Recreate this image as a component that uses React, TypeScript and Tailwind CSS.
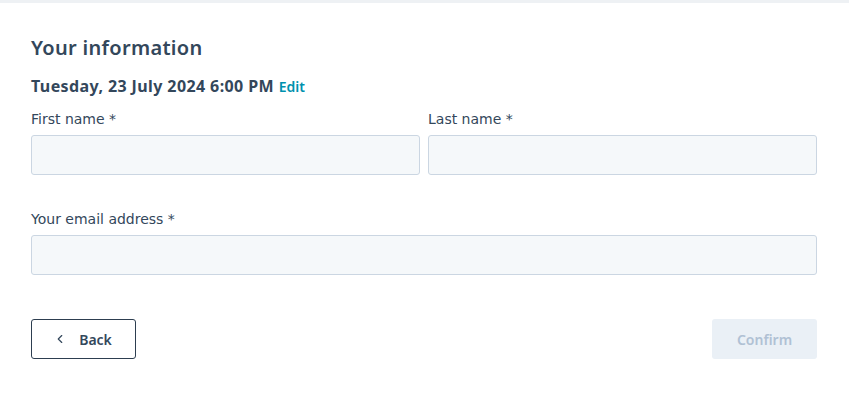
import { ChevronLeft } from 'lucide-react';

const font = { fontFamily: '"Noto Sans", "Liberation Sans", sans-serif' };
const wide = { fontFamily: '"DejaVu Sans", "Noto Sans", sans-serif' };

function Field({ label }: { label: string }) {
  return (
    <label className="flex flex-col">
      <span className="text-[14px] leading-[20px] text-[#33475b]" style={wide}>
        {label}
      </span>
      <input
        type="text"
        className="mt-[6px] h-[40px] w-full rounded-[3px] border border-[#cbd6e2] bg-[#f5f8fa] px-3 text-[14px] text-[#33475b] outline-none"
      />
    </label>
  );
}

export default function App() {
  return (
    <div className="min-h-[398px] w-[849px] bg-white" style={font}>
      <div className="h-[3px] bg-[#eef1f4]" />
      <div className="px-[31px] pt-[33px] pr-[32px]">
        <h1 className="text-[20px] font-semibold leading-[24px] tracking-[0.3px] text-[#33475b]">
          Your information
        </h1>
        <p className="mt-[16px] text-[16px] font-bold leading-[20px] tracking-[0.4px] text-[#33475b]">
          Tuesday, 23 July 2024 6:00 PM{' '}
          <a className="text-[14px] font-semibold tracking-normal text-[#0091ae]">Edit</a>
        </p>
        <div className="mt-[12px] grid grid-cols-2 gap-[8px]">
          <Field label="First name *" />
          <Field label="Last name *" />
        </div>
        <div className="mt-[34px]">
          <Field label="Your email address *" />
        </div>
        <div className="mt-[44px] flex items-center justify-between">
          <button
            type="button"
            className="flex h-[40px] w-[105px] items-center justify-center gap-[12px] rounded-[3px] border border-[#2d3e50] bg-white pr-[2px] text-[14px] font-semibold text-[#33475b]"
          >
            <ChevronLeft size={14} strokeWidth={2} />
            Back
          </button>
          <button
            type="button"
            disabled
            className="h-[40px] w-[105px] rounded-[3px] bg-[#eaf0f6] text-[14px] font-semibold text-[#b0c1d4]"
          >
            Confirm
          </button>
        </div>
      </div>
    </div>
  );
}
